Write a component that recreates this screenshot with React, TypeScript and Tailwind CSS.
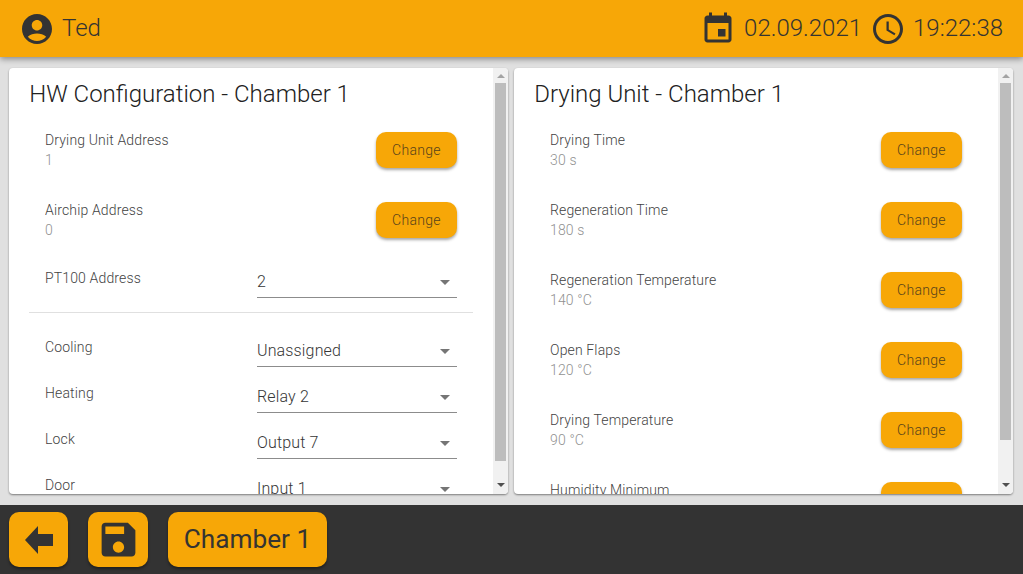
const Ico = ({ d, className }: { d: string; className: string }) => (
  <svg viewBox="0 0 24 24" className={className} fill="currentColor"><path d={d} /></svg>
);

const ACCOUNT = "M12 2C6.48 2 2 6.48 2 12s4.48 10 10 10 10-4.48 10-10S17.52 2 12 2zm0 4c1.93 0 3.5 1.57 3.5 3.5S13.93 13 12 13s-3.5-1.57-3.5-3.5S10.07 6 12 6zm0 14c-2.03 0-4.43-.82-6.14-2.88C7.55 15.8 9.68 15 12 15s4.45.8 6.14 2.12C16.43 19.18 14.03 20 12 20z";
const EVENT = "M17 12h-5v5h5v-5zM16 1v2H8V1H6v2H5c-1.11 0-1.99.9-1.99 2L3 19c0 1.1.89 2 2 2h14c1.1 0 2-.9 2-2V5c0-1.1-.9-2-2-2h-1V1h-2zm3 18H5V8h14v11z";
const CLOCK = "M11.99 2C6.47 2 2 6.48 2 12s4.47 10 9.99 10C17.52 22 22 17.52 22 12S17.52 2 11.99 2zM12 20c-4.42 0-8-3.58-8-8s3.58-8 8-8 8 3.58 8 8-3.58 8-8 8zm.5-13H11v6l5.25 3.15.75-1.23-4.5-2.67z";
const SAVE = "M17 3H5c-1.11 0-2 .9-2 2v14c0 1.1.89 2 2 2h14c1.1 0 2-.9 2-2V7l-4-4zm-5 16c-1.66 0-3-1.34-3-3s1.34-3 3-3 3 1.34 3 3-1.34 3-3 3zm3-10H5V5h10v4z";

const ChangeRow = ({ label, value }: { label: string; value: string }) => (
  <div className="h-[70px] shrink-0 flex items-center justify-between pl-[36px] pr-[36px]">
    <div className="flex flex-col tracking-[0.15px]">
      <span className="text-[14px] leading-[20px] text-[#212121] opacity-[0.85] font-light">{label}</span>
      <span className="text-[14px] leading-[20px] text-[#212121] opacity-[0.5] font-light">{value}</span>
    </div>
    <button className="w-[81px] h-[36px] rounded-[10px] bg-[#f7a707] text-[14px] font-light text-[#212121] tracking-[0.3px] shadow-[0_2px_3px_rgba(0,0,0,0.35)]">
      <span className="opacity-[0.75]">Change</span>
    </button>
  </div>
);

const SelectRow = ({ label, value, h, labelPt }: { label: string; value: string; h: string; labelPt: string }) => (
  <div className={`${h} shrink-0 flex justify-between items-end pl-[36px] pr-[36px]`}>
    <span className={`${labelPt} self-start text-[14px] leading-[20px] tracking-[0.15px] text-[#212121] opacity-[0.85] font-light`}>{label}</span>
    <div className="w-[200px] h-[34px] border-b border-[#8c8c8c] flex items-center justify-between pr-[7px]">
      <span className="pt-[2px] text-[16px] tracking-[0.15px] font-light text-[#212121] opacity-[0.9]">{value}</span>
      <span className="mt-[3px] w-0 h-0 border-x-[5px] border-x-transparent border-t-[5px] border-t-[#757575]"></span>
    </div>
  </div>
);

const Scrollbar = ({ thumb }: { thumb: string }) => (
  <div className="w-[15px] shrink-0 bg-[#f1f1f1] flex flex-col items-center">
    <div className="h-[15px] shrink-0 flex items-center justify-center">
      <span className="w-0 h-0 border-x-[4px] border-x-transparent border-b-[4px] border-b-[#a3a3a3]"></span>
    </div>
    <div className={`w-[11px] shrink-0 bg-[#bdbdbd] ${thumb}`}></div>
    <div className="flex-1 flex items-end justify-center pb-[7px]">
      <span className="w-0 h-0 border-x-[4px] border-x-transparent border-t-[4px] border-t-[#505050]"></span>
    </div>
  </div>
);

const Panel = ({ title, thumb, children }: { title: string; thumb: string; children: React.ReactNode }) => (
  <div className="flex-1 min-w-0 h-[426px] flex bg-white rounded-[4px] overflow-hidden shadow-[0_1px_2px_rgba(0,0,0,0.45)]">
    <div className="flex-1 min-w-0 flex flex-col overflow-hidden">
      <div className="h-[47px] shrink-0 pl-[20.2px] pt-[10px] text-[24px] leading-[33px] font-light text-[#212121]">{title}</div>
      {children}
    </div>
    <Scrollbar thumb={thumb} />
  </div>
);

export default function App() {
  return (
    <div className="w-[1023px] h-[574px] flex flex-col bg-[#e0e0e0] overflow-hidden font-['Roboto',sans-serif]">
      <header className="relative h-[57px] shrink-0 bg-[#f7a707] text-[#333] flex items-center pl-[19px] pr-[20px] shadow-[0_2px_6px_rgba(0,0,0,0.4)]">
        <Ico d={ACCOUNT} className="w-[36px] h-[36px]" />
        <span className="ml-[7px] -mt-[1px] text-[24px] font-light opacity-[0.99]">Ted</span>
        <div className="ml-auto flex items-center">
          <Ico d={EVENT} className="w-[36px] h-[36px]" />
          <span className="ml-[8px] -mt-[1px] text-[24px] font-light opacity-[0.99]">02.09.2021</span>
          <Ico d={CLOCK} className="ml-[8px] w-[36px] h-[36px]" />
          <span className="ml-[7px] -mt-[1px] text-[24px] font-light opacity-[0.99]">19:22:38</span>
        </div>
      </header>

      <main className="flex-1 min-h-0 flex gap-[6px] pl-[9px] pr-[10px] pt-[11px]">
        <Panel title="HW Configuration - Chamber 1" thumb="h-[378px]">
          <ChangeRow label="Drying Unit Address" value="1" />
          <ChangeRow label="Airchip Address" value="0" />
          <SelectRow label="PT100 Address" value="2" h="h-[43px]" labelPt="pt-[13px]" />
          <div className="shrink-0 h-px mt-[14px] ml-[20px] mr-[20px] bg-[#e0e0e0]"></div>
          <SelectRow label="Cooling" value="Unassigned" h="h-[54px]" labelPt="pt-[24px]" />
          <SelectRow label="Heating" value="Relay 2" h="h-[46px]" labelPt="pt-[16px]" />
          <SelectRow label="Lock" value="Output 7" h="h-[46px]" labelPt="pt-[16px]" />
          <SelectRow label="Door" value="Input 1" h="h-[46px]" labelPt="pt-[16px]" />
        </Panel>
        <Panel title="Drying Unit - Chamber 1" thumb="h-[357px]">
          <ChangeRow label="Drying Time" value="30 s" />
          <ChangeRow label="Regeneration Time" value="180 s" />
          <ChangeRow label="Regeneration Temperature" value="140 °C" />
          <ChangeRow label="Open Flaps" value="120 °C" />
          <ChangeRow label="Drying Temperature" value="90 °C" />
          <ChangeRow label="Humidity Minimum" value="10 %" />
        </Panel>
      </main>

      <footer className="h-[69px] shrink-0 bg-[#333] flex items-start pt-[7px] pl-[9px] text-[#333]">
        <button className="w-[59px] h-[55px] rounded-[10px] bg-[#f7a707] flex items-center justify-center shadow-[0_2px_3px_rgba(0,0,0,0.4)]">
          <svg viewBox="0 0 28 28" className="w-[28px] h-[28px]" fill="currentColor"><path d="M0 14 13 0V8H28V20H13V28Z" /></svg>
        </button>
        <button className="ml-[20px] w-[60px] h-[55px] rounded-[10px] bg-[#f7a707] flex items-center justify-center shadow-[0_2px_3px_rgba(0,0,0,0.4)]">
          <Ico d={SAVE} className="w-[45px] h-[45px]" />
        </button>
        <button className="ml-[20px] w-[159px] h-[55px] rounded-[10px] bg-[#f7a707] text-[26.2px] shadow-[0_2px_3px_rgba(0,0,0,0.4)]">
          <span className="opacity-[0.99]">Chamber 1</span>
        </button>
      </footer>
    </div>
  );
}
